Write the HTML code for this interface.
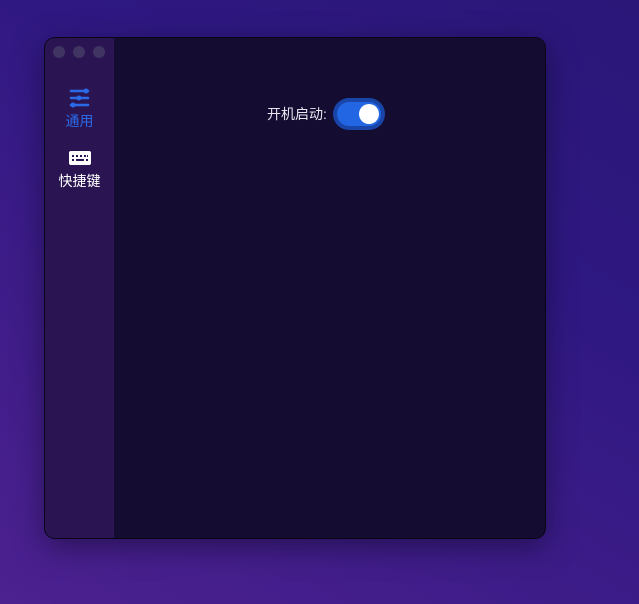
<!DOCTYPE html>
<html><head><meta charset="utf-8"><style>
html,body{margin:0;padding:0;width:639px;height:604px;overflow:hidden}
body{background:linear-gradient(30deg,#4c2190 0%,#3d1c88 35%,#2f1882 65%,#2a1778 100%);position:relative;font-family:"Liberation Sans","Noto Sans CJK SC",sans-serif}
.win{position:absolute;left:45px;top:38px;width:500px;height:500px;border-radius:10px;overflow:hidden;background:#140c31;box-shadow:0 0 0 1px #0a0618,0 8px 30px rgba(10,5,30,.5)}
.side{position:absolute;left:0;top:0;width:69px;height:100%;background:#2a1552}
.dot{position:absolute;top:8px;width:12px;height:12px;border-radius:50%;background:#3f3462}
.item{position:absolute;left:0;width:69px;text-align:center;font-size:14px}
.lbl{position:absolute;left:222px;top:66px;color:#e8e6f0;font-size:14px}
.tog{position:absolute;left:288px;top:60px;width:52px;height:32px;border-radius:16px;background:#1a45a8}
.tog i{position:absolute;left:4px;top:4px;width:44px;height:24px;border-radius:12px;background:#2266e3}
.tog b{position:absolute;left:26px;top:6px;width:20px;height:20px;border-radius:50%;background:#fff}
</style></head><body>
<div class="win">
<div class="side">
<div class="dot" style="left:8px"></div><div class="dot" style="left:28px"></div><div class="dot" style="left:48px"></div>
<div class="item" style="top:50px;color:#2a6ae8">
<svg width="22" height="20" viewBox="0 0 22 20" style="display:block;margin:0 auto"><g stroke="#2a6ae8" stroke-width="2.5" stroke-linecap="round"><line x1="2" y1="3" x2="19" y2="3"/><line x1="2" y1="10" x2="19" y2="10"/><line x1="2" y1="17" x2="19" y2="17"/></g><g fill="#2a6ae8"><circle cx="17" cy="3" r="2.5"/><circle cx="10" cy="10" r="2.5"/><circle cx="4" cy="17" r="2.5"/></g></svg>
<div style="margin-top:3px">通用</div></div>
<div class="item" style="top:113px;color:#fff">
<svg width="22" height="14" viewBox="0 0 22 14" style="display:block;margin:0 auto"><rect x="0" y="0" width="22" height="14" rx="2" fill="#fff"/><g fill="#2a1552"><rect x="3" y="4" width="2" height="2"/><rect x="7" y="4" width="2" height="2"/><rect x="11" y="4" width="2" height="2"/><rect x="15" y="4" width="2" height="2"/><rect x="3" y="8" width="2" height="2"/><rect x="7" y="8" width="8" height="2"/><rect x="17" y="8" width="2" height="2"/><rect x="18" y="4" width="1" height="2"/></g></svg>
<div style="margin-top:6px">快捷键</div></div>
</div>
<div class="lbl">开机启动:</div>
<div class="tog"><i></i><b></b></div>
</div>
</body></html>
